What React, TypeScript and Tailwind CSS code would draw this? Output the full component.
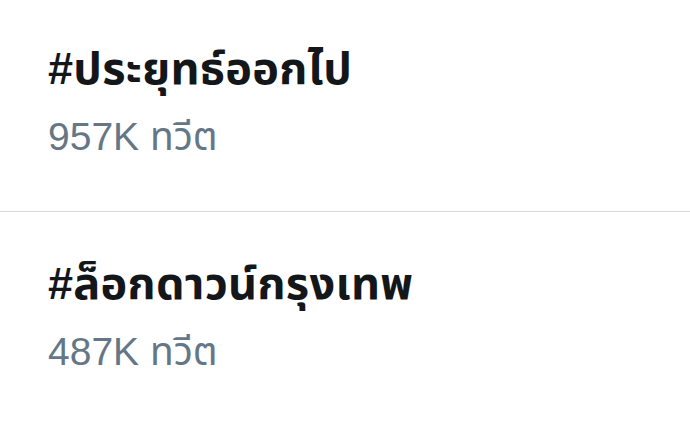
const trends = [
  { tag: '#ประยุทธ์ออกไป', count: '957K ทวีต' },
  { tag: '#ล็อกดาวน์กรุงเทพ', count: '487K ทวีต' },
]

export default function App() {
  return (
    <div
      className="w-[690px] h-[427px] bg-white overflow-hidden"
      style={{ fontFamily: '"Liberation Sans", "Noto Sans Thai", "Noto Sans", Loma, Garuda, sans-serif' }}
    >
      {trends.map((t, i) => (
        <div
          key={i}
          className={
            i === 0
              ? 'h-[212px] px-12 pt-[44px] border-b border-[#d9d9d9]'
              : 'px-12 pt-[47px]'
          }
        >
          <div className="text-[45px] leading-[50px] font-bold tracking-[0.3px] text-[#14171a]">{t.tag}</div>
          <div className="mt-[18px] text-[39px] leading-[50px] text-[#657786]">{t.count}</div>
        </div>
      ))}
    </div>
  )
}
